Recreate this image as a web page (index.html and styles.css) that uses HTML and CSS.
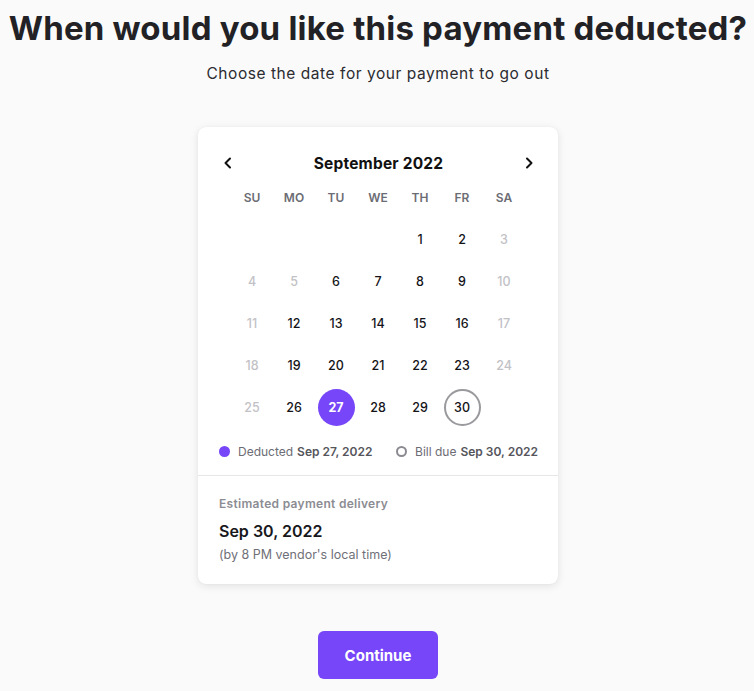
FILE: index.html
```html
<!DOCTYPE html>
<html lang="en">
<head>
<meta charset="utf-8">
<title>Payment date</title>
<link rel="stylesheet" href="styles.css">
</head>
<body>
<main class="page">
  <h1 class="title">When would you like this payment deducted?</h1>
  <p class="subtitle">Choose the date for your payment to go out</p>

  <section class="card">
    <div class="cal">
      <div class="cal-head">
        <button class="nav" aria-label="Previous month">
          <svg width="12" height="12" viewBox="0 0 12 12"><path d="M8 1.5 3.5 6 8 10.5" fill="none" stroke="#111" stroke-width="2" stroke-linecap="round" stroke-linejoin="round"/></svg>
        </button>
        <div class="month">September 2022</div>
        <button class="nav" aria-label="Next month">
          <svg width="12" height="12" viewBox="0 0 12 12"><path d="M4 1.5 8.5 6 4 10.5" fill="none" stroke="#111" stroke-width="2" stroke-linecap="round" stroke-linejoin="round"/></svg>
        </button>
      </div>
      <div class="grid">
        <div class="wd">SU</div><div class="wd">MO</div><div class="wd">TU</div><div class="wd">WE</div><div class="wd">TH</div><div class="wd">FR</div><div class="wd">SA</div>

        <div class="day"></div><div class="day"></div><div class="day"></div><div class="day"></div>
        <div class="day">1</div><div class="day">2</div><div class="day off">3</div>

        <div class="day off">4</div><div class="day off">5</div><div class="day">6</div><div class="day">7</div><div class="day">8</div><div class="day">9</div><div class="day off">10</div>

        <div class="day off">11</div><div class="day">12</div><div class="day">13</div><div class="day">14</div><div class="day">15</div><div class="day">16</div><div class="day off">17</div>

        <div class="day off">18</div><div class="day">19</div><div class="day">20</div><div class="day">21</div><div class="day">22</div><div class="day">23</div><div class="day off">24</div>

        <div class="day off">25</div><div class="day">26</div><div class="day"><span class="sel">27</span></div><div class="day">28</div><div class="day">29</div><div class="day"><span class="due">30</span></div><div class="day"></div>
      </div>
      <div class="legend">
        <div class="leg"><span class="dot"></span>Deducted <b>Sep 27, 2022</b></div>
        <div class="leg"><span class="ring"></span>Bill due <b>Sep 30, 2022</b></div>
      </div>
    </div>
    <div class="delivery">
      <div class="est">Estimated payment delivery</div>
      <div class="date">Sep 30, 2022</div>
      <div class="note">(by 8 PM vendor's local time)</div>
    </div>
  </section>

  <button class="continue">Continue</button>
</main>
</body>
</html>
```

FILE: styles.css
```css
* { box-sizing: border-box; }

html, body {
  margin: 0;
  padding: 0;
  background: #fafafa;
}

body {
  font-family: Inter, "Noto Sans", sans-serif;
  color: #1f1f24;
}

.page {
  display: flex;
  flex-direction: column;
  align-items: center;
  padding-left: 2px;
}

.title {
  margin: 8px 0 0;
  font-size: 33px;
  line-height: 40px;
  font-weight: 700;
  color: #222226;
  letter-spacing: 0.2px;
  white-space: nowrap;
}

.subtitle {
  margin: 15px 0 0;
  font-size: 15.5px;
  line-height: 22px;
  color: #2b2b30;
  letter-spacing: 0.55px;
}

.card {
  margin-top: 42px;
  width: 360px;
  background: #fff;
  border-radius: 8px;
  box-shadow: 0 2px 8px rgba(0, 0, 0, 0.10), 0 0 1px rgba(0, 0, 0, 0.08);
}

.cal {
  padding-top: 23px;
  border-bottom: 1px solid #e6e6e8;
}

.cal-head {
  display: flex;
  align-items: center;
  justify-content: space-between;
  height: 26px;
  padding: 0 23px 0 24px;
}

.nav {
  width: 12px;
  height: 12px;
  padding: 0;
  border: 0;
  background: none;
  display: flex;
}

.month {
  font-size: 15.5px;
  font-weight: 700;
  color: #111;
  letter-spacing: 0.2px;
}

.grid {
  width: 294px;
  margin: 0 auto;
  display: grid;
  grid-template-columns: repeat(7, 42px);
  grid-auto-rows: 42px;
}

.wd {
  display: flex;
  align-items: center;
  justify-content: center;
  font-size: 12px;
  font-weight: 600;
  color: #6c6c74;
}

.day {
  display: flex;
  align-items: center;
  justify-content: center;
  font-size: 12.5px;
  font-weight: 500;
  color: #141418;
}

.day.off {
  color: #c2c2c6;
}

.sel, .due {
  width: 37px;
  height: 37px;
  border-radius: 50%;
  display: flex;
  align-items: center;
  justify-content: center;
}

.sel {
  background: #7646f8;
  color: #fff;
  font-weight: 700;
}

.due {
  border: 2px solid #9a9a9e;
}

.legend {
  display: flex;
  justify-content: space-between;
  align-items: center;
  height: 22px;
  margin: 12px 0 13px;
  padding: 0 20px 0 21px;
  font-size: 12px;
  color: #6c6c74;
}

.leg {
  display: flex;
  align-items: center;
}

.leg b {
  font-weight: 600;
  color: #55555c;
  margin-left: 4px;
}

.dot, .ring {
  width: 11px;
  height: 11px;
  border-radius: 50%;
  margin-right: 8px;
}

.dot { background: #7646f8; }

.ring { border: 2px solid #8a8a90; }

.delivery {
  padding: 20px 21px 20px;
}

.est {
  font-size: 12px;
  line-height: 16px;
  font-weight: 600;
  color: #8c8c93;
  letter-spacing: 0.3px;
}

.date {
  margin-top: 8px;
  font-size: 16px;
  line-height: 22px;
  font-weight: 600;
  color: #18181c;
}

.note {
  margin-top: 4px;
  font-size: 12.5px;
  line-height: 18px;
  color: #707078;
}

.continue {
  margin-top: 47px;
  width: 120px;
  height: 48px;
  border: 0;
  border-radius: 6px;
  background: #7646f8;
  color: #fff;
  font-family: inherit;
  font-size: 15px;
  font-weight: 700;
}
```
